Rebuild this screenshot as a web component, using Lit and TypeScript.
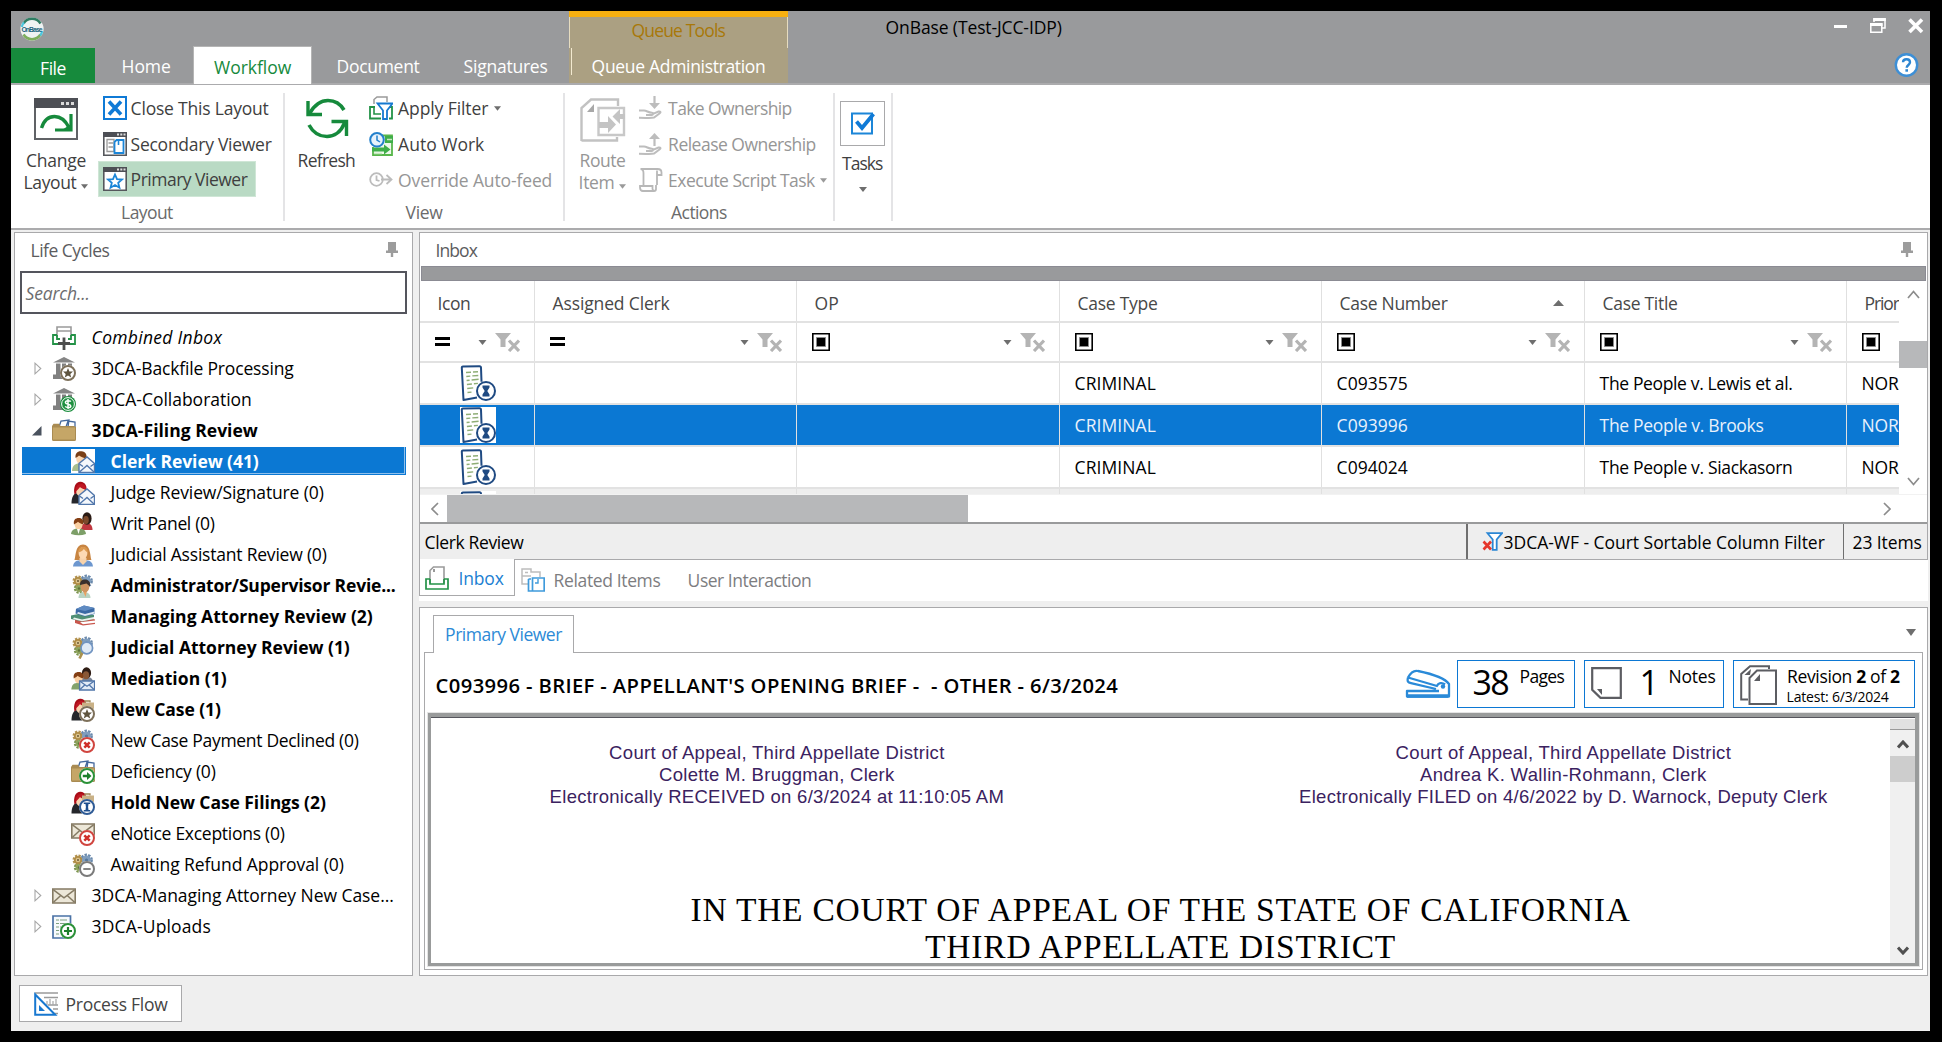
import { LitElement, html, css, svg, nothing } from "lit";
import { customElement, property } from "lit/decorators.js";
import { classMap } from "lit/directives/class-map.js";

/* A one-line label whose letter spacing is tuned so that it spans a set width. */
@customElement("fit-text")
class FitText extends LitElement {
  @property() text = "";
  @property({ type: Number }) w = 0;

  static styles = css`
    :host { display: inline-block; flex: none; white-space: pre; }
    .run { margin-left: -0.400px; white-space: pre; }
  `;

  firstUpdated() {
    const run = this.renderRoot.querySelector(".run") as HTMLElement;
    const natural = run.getBoundingClientRect().width;
    const gaps = Math.max(1, this.text.length - 1);
    this.style.width = `${this.w}px`;
    run.style.letterSpacing = `${((this.w + 1.2 - natural) / gaps).toFixed(3)}px`;
  }

  render() {
    return html`<span class="run">${this.text}</span>`;
  }
}

const t = (text: string, w: number, cls = "") =>
  html`<fit-text class=${cls} .text=${text} .w=${w}></fit-text>`;

const icon = (w: number, h: number, body: unknown, box = `0 0 ${w} ${h}`) =>
  html`<svg class="ico" width=${w} height=${h} viewBox=${box} fill="none">${body}</svg>`;

const caret = (fill = "#6e6e6e", w = 7) =>
  html`<svg class="ico" width=${w} height="5" viewBox="0 0 8 5"><path d="M0 0h8L4 5z" fill=${fill} /></svg>`;

/* ---------- tree icon parts ---------- */
const capitol = svg`<path d="M1 5.500 12 0l11 5.500z" fill="#858585"/><path d="M4 6.500h4.500v11H4zM10 6.500h4v11h-4zM16 6.500h4v9h-4zM1 17.500h12V22H1z" fill="#808080"/>`;
const badge = (color: string, inner: unknown) =>
  svg`<circle cx="16" cy="16" r="8" fill="#fff"/><circle cx="16" cy="16" r="7" fill="#fff" stroke=${color} stroke-width="2"/>${inner}`;
const starB = badge("#7d705a", svg`<path d="m16 11 1.400 3.400 3.600.2-2.700 2.300.9 3.500-3.200-2-3.200 2 .9-3.500-2.700-2.300 3.600-.2z" fill="#5f5540"/>`);
const dollarB = svg`<circle cx="16" cy="16" r="8" fill="#1e9040"/><circle cx="16" cy="16" r="6.400" stroke="#fff" stroke-width="1"/><path d="M18.800 13.600c-.8-1.200-5.400-1.400-5.400.8s5.400 1.300 5.400 3.500-4.400 2-5.600.5M16 11v10" stroke="#fff" stroke-width="1.500"/>`;
const xB = badge("#d0453f", svg`<path d="m13.300 13.300 5.400 5.400m0-5.400-5.400 5.400" stroke="#cf2f2a" stroke-width="2.500"/>`);
const arrowB = badge("#2b9138", svg`<path d="M11.800 14.800H16v-2.800l4.500 4-4.500 4v-2.800h-4.200z" fill="#1d7f2c"/>`);
const hourB = badge("#2f5b96", svg`<path d="M12.800 11.500h6.400v1.600h-1.700l-.4 2.900.4 3h1.700v1.600h-6.400V19h1.700l.4-3-.4-2.900h-1.700z" fill="#1e4f8f"/>`);
const minusB = badge("#7b7b7b", svg`<path d="M12.300 16h7.400" stroke="#777" stroke-width="1.800"/>`);
const plusB = badge("#2b9138", svg`<path d="M12 16h8M16 12v8" stroke="#1d7f2c" stroke-width="2.200"/>`);
const briefcase = svg`<path d="M14 4.500V3h5v1.500" stroke="#9c8454" stroke-width="1.300"/><path d="M11 4.500h12v7H11z" fill="#c9b186"/>`;
const miniMail = svg`<path d="m8 14.500 8-6.500 7.500 6.500v9H8z" fill="#f5f8fc" stroke="#5277ab" stroke-width="1.400"/><path d="m8.500 15 3.500 2.500m11-2.500-3.500 2.500M8.500 23l7.500-6.500 7 6.500" stroke="#5277ab" stroke-width="1.400"/>`;
const judge = svg`<path d="M.5 22.500c0-6 2-9.500 4.500-10.500l6 4v6.500z" fill="#25262b"/><path d="M3.500 13.500C2 6 5 .5 9.500.8c5 .2 6.500 5 6 8.200H9z" fill="#a90d18"/><ellipse cx="9.500" cy="10" rx="4.300" ry="5.200" fill="#f9d3b0"/><path d="M4.500 11C4 6 7 3 10 3s5 2 5 5C12 8.500 10 7 9 6c-1 2-3 3-4.500 5z" fill="#bf1622"/>`;
const clerk = svg`<path d="M1 22c.3-5.500 3-7.500 7-7.500s6 3 6 7.500z" fill="#a9bf8f"/><ellipse cx="9.800" cy="9.500" rx="4.600" ry="5.600" fill="#fbd5ae"/><path d="M4.600 9C3.800 4 7 1.700 10.500 2.200 14.600 2.500 16.500 6 15.300 10 13 8.800 9 7.600 8 6.600 7 8 5.500 8.200 4.600 9z" fill="#7a3f16"/>`;
const pair = svg`<path d="M10 18c0-5 2-7 6-7 3.500 0 5.500 3 5.500 7z" fill="#c0373f"/><ellipse cx="16" cy="6.500" rx="4.600" ry="6.200" fill="#2a1a14"/><ellipse cx="15" cy="8" rx="2.800" ry="4" fill="#7d4a2c"/><path d="M0 22C.5 18 3 16.500 7.500 16.500S14.500 18 15 22q-7 2.500-15 0z" fill="#7d9f68"/><ellipse cx="7.600" cy="12.500" rx="4" ry="4.800" fill="#fbd0a2"/><path d="M3 12.500c-.8-4.500 1.400-6.500 4.800-6.500s5.400 2.500 4.500 6.500c-2-.8-4.500-2-5.300-2.800C6 11 4 11.500 3 12.500z" fill="#843f14"/><path d="M6 17h3l-1.500 5z" fill="#fff"/>`;
const gears = svg`<circle cx="7" cy="7" r="4.400" stroke="#b3924f" stroke-width="2.200" stroke-dasharray="2.200 1.250"/><circle cx="15.500" cy="7" r="5.200" stroke="#6a89ac" stroke-width="2.400" stroke-dasharray="2.400 1.250"/><circle cx="8" cy="14.500" r="4.200" stroke="#7d9450" stroke-width="2" stroke-dasharray="2.200 1.200"/><circle cx="15.500" cy="7" r="4.600" fill="#7f9dbd"/><circle cx="7" cy="7" r="3.200" fill="#dcc48d" stroke="#b08d47" stroke-width="1.800"/><circle cx="7" cy="7" r="1" fill="#6b5a34"/><circle cx="8" cy="14.500" r="3.400" fill="#8da35c"/><circle cx="8" cy="14.500" r="1.200" fill="#5e7338"/><circle cx="15.500" cy="7" r="1.600" fill="#56779b"/>`;
const folder = svg`<path d="m7 8 2-6 8-1-1 7zM14 8l2-6 7 1v6z" fill="#fff" stroke="#44689c" stroke-width="1.300"/><path d="M0 7 1.500 4.800H7L8.500 7H22l2 1v12.500q0 1.500-1.500 1.500h-21Q0 22 0 20.500z" fill="#a98b52"/><path d="M1 8.500h22v12H1z" fill="#c5a667"/>`;
const mail = svg`<path d="M.8 5h22.400v14H.8z" fill="#ece7d8" stroke="#847a63" stroke-width="1.600"/><path d="m1.500 5.800 10.500 8 10.500-8M1.500 18.300l7.500-7m13.500 7-7.500-7" stroke="#847a63" stroke-width="1.500"/>`;

const treeIcons: Record<string, unknown> = {
  combined: svg`<path d="M5 11V1h14v10M5 5h14" stroke="#9a9a9a" stroke-width="1.600"/><path d="M5 9H1v9h7M19 9h4v9h-7M5 9v4h3M19 9v4h-3" stroke="#239247" stroke-width="1.800"/><path d="M12 11.500V24M6 17.500h12" stroke="#4c4c4c" stroke-width="2.800"/>`,
  capStar: svg`${capitol}${starB}`,
  capDollar: svg`${capitol}${dollarB}`,
  folder,
  clerk: svg`<path d="M0 0h24v24H0z" fill="#fff"/>${clerk}${miniMail}`,
  judge: svg`${judge}${miniMail}`,
  pair,
  woman: svg`<path d="M3.500 17C5 14 4 1.500 12 1.500S19 14 20.500 17z" fill="#c88542"/><path d="M2 23.500c.5-4.500 3-6.500 10-6.500s9.500 2 10 6.500z" fill="#6d97cf"/><path d="M8.500 15h7v3.500L12 22l-3.500-3.500z" fill="#f8d3ab"/><ellipse cx="12" cy="10" rx="4.400" ry="6" fill="#fdd9b3"/><path d="M7.200 9.500C7.500 5 10 3.500 13 4c3 .5 3.800 3 3.800 5.500-2-1-3-2.500-4-3.500-1 2-3.300 3-5.600 3.500z" fill="#dc9a50"/>`,
  admin: svg`${gears}<path d="M7.500 24c0-4 2-6 5.500-6s6.500 2 6.500 6z" fill="#b9d3c2"/><path d="M12 17h4l-1.500 6z" fill="#e9a263"/><ellipse cx="14" cy="13" rx="4.300" ry="5.200" fill="#cf9561"/><path d="M9 11c0-4 2-5.500 5-5.500s6 2 5 7l-3.500-3z" fill="#3a302c"/>`,
  books: svg`<path d="m4 15 14-2 6 1.500v4.500l-12 1.500-8-2.500z" fill="#c9564c"/><path d="m9 17.300 15-1.800v2.300L12 19.300z" fill="#fff"/><path d="m0 10.500 12-2.500 11 2v4l-12 2.500L0 14z" fill="#4f8f74"/><path d="m3 12.500 8 2 12-2.500v2L11 16.300 2 14z" fill="#eef2ee"/><path d="m5 4 8-3.500L23.500 3v6L14 11.500 4.500 8.500z" fill="#3a68a4"/><path d="m7 7 7 2 9.500-2.500V8.500L14 11 6 8.500z" fill="#dfe8f2"/><path d="m5 4 8-3.500L23.500 3 14 6z" fill="#5f8bc2"/>`,
  gearGlass: svg`${gears}<path d="m11.500 16.500-3 6" stroke="#a9904f" stroke-width="2.600"/><circle cx="15.800" cy="12" r="5.800" fill="#dfeaf6" stroke="#7295c2" stroke-width="1.700"/>`,
  mediation: svg`<path d="M10 16c0-4 2-6 6-6s6 2 6 6z" fill="#7b8494"/><ellipse cx="15.500" cy="6" rx="4.600" ry="5.800" fill="#2e1c14"/><ellipse cx="15" cy="8.200" rx="3.200" ry="4" fill="#8a5836"/><path d="M.3 22.500C.8 17 3 16 7.500 16s6 2 6 6.500z" fill="#83a36c"/><ellipse cx="7.500" cy="11.500" rx="4" ry="4.800" fill="#fbd0a2"/><path d="M2.800 11.500c-.8-4.500 1.400-6.500 5-6.500s5.200 2.500 4.300 6.500c-2-.8-4.600-2-5.400-2.800-.8 1.300-2.700 1.800-3.900 2.800z" fill="#843f14"/><path d="M8.600 14h15v9h-15z" fill="#e3ecf7" stroke="#5277ab" stroke-width="1.400"/><path d="m9 14.300 7 5 7-5M9 22.500l5-4.700m9 4.700-5-4.700" stroke="#5277ab" stroke-width="1.300"/>`,
  newCase: svg`${judge}${briefcase}${starB}`,
  gearX: svg`${gears}${xB}`,
  folderArrow: svg`${folder}${arrowB}`,
  hold: svg`${judge}${briefcase}${hourB}`,
  mailX: svg`<g transform="translate(0 -3)">${mail}</g>${xB}`,
  gearMinus: svg`${gears}${minusB}`,
  mail,
  upload: svg`<path d="M1 1h17.500v22H1z" fill="#f6f9fc" stroke="#4a72a5" stroke-width="1.700"/><path d="M4 5h3m1 0h7M4 8.500h3m1 0h7M4 12h3m1 0h5M4 15.500h3M4 19h3" stroke="#7fa07f" stroke-width="1.100"/>${plusB}`,
};

interface Node { label: string; w: number; icon: string; level: 1 | 2; open?: boolean; closed?: boolean; bold?: boolean; italic?: boolean; selected?: boolean; }
const nodes: Node[] = [
  { label: "Combined Inbox", w: 129, icon: "combined", level: 1, italic: true },
  { label: "3DCA-Backfile Processing", w: 201, icon: "capStar", level: 1, closed: true },
  { label: "3DCA-Collaboration", w: 159, icon: "capDollar", level: 1, closed: true },
  { label: "3DCA-Filing Review", w: 165, icon: "folder", level: 1, open: true, bold: true },
  { label: "Clerk Review (41)", w: 147, icon: "clerk", level: 2, bold: true, selected: true },
  { label: "Judge Review/Signature (0)", w: 212, icon: "judge", level: 2 },
  { label: "Writ Panel (0)", w: 103, icon: "pair", level: 2 },
  { label: "Judicial Assistant Review (0)", w: 215, icon: "woman", level: 2 },
  { label: "Administrator/Supervisor Revie...", w: 284, icon: "admin", level: 2, bold: true },
  { label: "Managing Attorney Review (2)", w: 261, icon: "books", level: 2, bold: true },
  { label: "Judicial Attorney Review (1)", w: 238, icon: "gearGlass", level: 2, bold: true },
  { label: "Mediation (1)", w: 115, icon: "mediation", level: 2, bold: true },
  { label: "New Case (1)", w: 109, icon: "newCase", level: 2, bold: true },
  { label: "New Case Payment Declined (0)", w: 247, icon: "gearX", level: 2 },
  { label: "Deficiency (0)", w: 104, icon: "folderArrow", level: 2 },
  { label: "Hold New Case Filings (2)", w: 214, icon: "hold", level: 2, bold: true },
  { label: "eNotice Exceptions (0)", w: 173, icon: "mailX", level: 2 },
  { label: "Awaiting Refund Approval (0)", w: 232, icon: "gearMinus", level: 2 },
  { label: "3DCA-Managing Attorney New Case...", w: 301, icon: "mail", level: 1, closed: true },
  { label: "3DCA-Uploads", w: 118, icon: "upload", level: 1, closed: true },
];

/* ---------- ribbon icons ---------- */
const winFrame = svg`<path d="M.8 .8h22.400v22.400H.8z" fill="#fff" stroke="#55575c" stroke-width="1.600"/><path d="M0 0h24v5H0z" fill="#4d4f55"/><path d="M14 1.600h2v2h-2zM17.300 1.600h2v2h-2zM20.500 1.600h2v2h-2z" fill="#dcdcdc"/>`;
const icons = {
  changeLayout: icon(44, 42, svg`<path d="M1 1h42v40H1z" fill="#fff" stroke="#606266" stroke-width="2"/><path d="M0 0h44v10H0z" fill="#4d4f55"/><path d="M27 4h3v3h-3zM32 4h3v3h-3zM37 4h3v3h-3z" fill="#dadada"/><path d="M7.500 30C10 22 15 18.500 20.500 18.500c6.500 0 11.500 5 14.500 11" stroke="#168a3c" stroke-width="3.400"/><path d="M37 16v16H21" stroke="#168a3c" stroke-width="3.200"/><path d="m28 32 9-6v6z" fill="#168a3c"/>`),
  closeLayout: icon(24, 24, svg`<path d="M1 1h22v22H1z" stroke="#0f7ad6" stroke-width="2" fill="#fff"/><path d="m6 5.500 12 13M18 5.500l-12 13" stroke="#0f7ad6" stroke-width="3.600"/>`),
  secondary: icon(24, 24, svg`${winFrame}<path d="M4 7.500h7v12H4zM5.500 11H10m-4.500 4H10" stroke="#9a9a9a" stroke-width="1.300"/><path d="M13.500 8h7v13h-9V10z" fill="#fff" stroke="#1c86d8" stroke-width="1.800"/><path d="M15.500 9v4" stroke="#1c86d8" stroke-width="1.600"/>`),
  primary: icon(24, 24, svg`${winFrame}<path d="m12 7.500 2 4.600 5 .4-3.800 3.300 1.200 4.900-4.400-2.700-4.400 2.700 1.200-4.900L5 12.500l5-.4z" stroke="#1c86d8" stroke-width="1.800"/>`),
  refresh: icon(44, 42, svg`<path d="M3 3v13.500h14" stroke="#168a3c" stroke-width="3.400"/><path d="M4.500 15.500C10 6 16 2.500 23 2.500c7 0 12.500 3.500 16 9.500" stroke="#168a3c" stroke-width="3.600"/><path d="M41.500 38V23.500h-15" stroke="#168a3c" stroke-width="3.400"/><path d="M39.500 25C36 34 29 38.500 22 38.500S8 34.500 4 27" stroke="#168a3c" stroke-width="3.600"/>`),
  applyFilter: icon(24, 24, svg`<path d="M5 8V3.500L8 1h10v5" stroke="#9a9a9a" stroke-width="1.500"/><path d="M6 11H1v11.500h11M19.500 11H23v11.500h-3" stroke="#239247" stroke-width="1.800"/><path d="M5 11v7h7" stroke="#239247" stroke-width="1.600"/><path d="M8.500 7.500h15l-5.500 7V23h-4v-8.500z" fill="#fff" stroke="#1579d0" stroke-width="1.800"/>`),
  autoWork: icon(24, 24, svg`<path d="M11 3.500h12V23H4v-8" fill="#eef8ec" stroke="#58b64b" stroke-width="1.800"/><path d="M16 4h8v7h-8zM3 15.500h12v-3l6.500 5-6.500 5v-3H3z" fill="#3fae49"/><path d="M18 7.500h5M5 21.500h8" stroke="#c5e8bf" stroke-width="1.400"/><circle cx="8" cy="7.800" r="6.800" fill="#e7f2fb" stroke="#2380cc" stroke-width="2"/><path d="M8 3.500V8l3 2" stroke="#2380cc" stroke-width="1.500"/>`),
  override: icon(24, 24, svg`<circle cx="7.500" cy="11.500" r="6.300" stroke="#bcbcbc" stroke-width="1.800"/><path d="M7.500 7.500V12l3 1M12 11.500h10m-4.500-4.500 5 4.500-5 4.500" stroke="#bcbcbc" stroke-width="1.800"/>`),
  route: icon(46, 44, svg`<path d="M1.500 43V10L11 1.500h27V8" stroke="#c2c2c2" stroke-width="2.400"/><path d="M1.500 42.500H37V39" stroke="#c2c2c2" stroke-width="2.400"/><path d="M14 6v8H7z" fill="#a8a8a8"/><path d="M18.500 10H44v27H18.500z" fill="#fff" stroke="#c8c8c8" stroke-width="2.400"/><path d="M19 24h9v-6l8 8.500-8 8.500v-5h-9zM45 16h-5v-5l-7.500 7.500L40 26v-5h5z" fill="#c4c4c4"/>`),
  take: icon(24, 24, svg`<path d="M15.500 0v8" stroke="#bdbdbd" stroke-width="2.200"/><path d="M10 7l5.500 6L21 7z" fill="#bdbdbd"/><path d="M0 14.500h5c3 0 4 2.200 8 2.200 1.500 0 1.500 2.200 0 2.200H7m7-1 5.500-2.400c2.200-.4 2.500.9 1.300 1.800L15 21.500c-4 1-7 .2-15 .2" stroke="#bdbdbd" stroke-width="2"/>`),
  release: icon(24, 24, svg`<path d="M15.500 14V5" stroke="#bdbdbd" stroke-width="2.200"/><path d="m10 7 5.500-6L21 7z" fill="#bdbdbd"/><path d="M0 14.500h5c3 0 4 2.200 8 2.200 1.500 0 1.500 2.200 0 2.200H7m7-1 5.500-2.400c2.200-.4 2.500.9 1.300 1.800L15 21.500c-4 1-7 .2-15 .2" stroke="#bdbdbd" stroke-width="2"/>`),
  script: icon(24, 24, svg`<path d="M4.500 18V5q0-4-3-4h17q4 0 4 3.500V7H18V2.500M17 17v4q0 2-2 2H4q-3 0-3-3.500V18h12.500V21q.5 2 2 2M18 7v10" stroke="#b8b8b8" stroke-width="1.800"/>`),
  tasks: icon(24, 24, svg`<path d="M1 1.500h20v20H1z" stroke="#1c86d8" stroke-width="2"/><path d="m5.500 9.500 5.500 6.500L22.500 2" stroke="#0f7ad6" stroke-width="3.800"/>`),
};
const pin = icon(12, 15, svg`<path d="M2 0h8v8.500h2V11H7.200v4H4.800v-4H0V8.500h2z" fill="#9c9c9c"/>`);
const funnelX = icon(25, 19, svg`<path d="M0 0h16l-5.500 6.500V14h-5V6.500z" fill="#b4b4b4"/><path d="m14 7.500 10 10.500m0-10.500L14 18" stroke="#b4b4b4" stroke-width="3.200"/>`);
const equals = icon(15, 10, svg`<path d="M0 0h15v3H0zM0 6h15v3H0z" fill="#000"/>`);
const contains = icon(18, 18, svg`<path d="M.8 .8h16.400v16.400H.8z" fill="#fff" stroke="#000" stroke-width="1.600"/><path d="M4.500 4.500h9v9h-9z" fill="#000" stroke="#8a8a8a" stroke-width="1"/>`);
const docIcon = icon(36, 36, svg`<path d="M1.800 2.800 20.500 1.200l1.500 24.300L17 33 3 35z" fill="#fff"/><path d="M17 32.500 3.500 35 1.800 2.800Q1.700 1.500 3 1.400L19.500 1.200q1.500 0 1.500 1.500l.5 14" stroke="#1f4a82" stroke-width="2" stroke-linejoin="round"/><path d="m6 7.500 5-.3m2-.2 5-.3M6.300 11.500l4-.4m2-.2 6-.4M6.600 15.500l3-.3m2-.2 7-.7M6.900 19.500l5-.5m2-.2 4-.4M7.200 23.500l6-.6M7.500 27.500l4-.4" stroke="#8fae76" stroke-width="1.400"/><circle cx="26" cy="26" r="9" fill="#fff" stroke="#1f4a82" stroke-width="2"/><path d="M22.500 20.500h7v2L27.300 26l2.200 3.500v2h-7v-2l2.200-3.500-2.200-3.500z" fill="#1f4a82"/>`);

interface Col { title: string; w: number; tw: number; eq?: boolean; sort?: boolean; last?: boolean; }
const cols: Col[] = [
  { title: "Icon", w: 115, tw: 32, eq: true },
  { title: "Assigned Clerk", w: 262, tw: 116, eq: true },
  { title: "OP", w: 263, tw: 23 },
  { title: "Case Type", w: 262, tw: 79 },
  { title: "Case Number", w: 263, tw: 107, sort: true },
  { title: "Case Title", w: 262, tw: 74 },
  { title: "Prior", w: 52, tw: 34, last: true },
];
const rows = [
  { num: "C093575", title: "The People v. Lewis et al.", tw: 192 },
  { num: "C093996", title: "The People v. Brooks", tw: 163, sel: true },
  { num: "C094024", title: "The People v. Siackasorn", tw: 192 },
];

@customElement("app-root")
class AppRoot extends LitElement {
  static styles = css`
    :host { display: block; width: 1942px; height: 1042px; background: #000; font: 17.5px/22px "Open Sans", "Noto Sans", sans-serif; color: #000; overflow: hidden; }
    * { box-sizing: border-box; }
    .ico { display: block; flex: none; }
    .window { height: 1042px; padding: 11px 12px 11px 11px; display: flex; flex-direction: column; }

    .top { height: 74px; background: #999a9c; border-bottom: 2px solid #ababad; display: flex; align-items: stretch; color: #fff; flex: none; }
    .brand { width: 558px; flex: none; display: flex; flex-direction: column; justify-content: space-between; }
    .logo { padding: 6px 0 0 9px; }
    .tabs { display: flex; height: 36px; align-items: stretch; }
    .tab { display: flex; align-items: center; justify-content: center; padding-top: 2px; flex: none; }
    .file { width: 84px; background: #168a3c; padding-top: 4px; margin-top: 1px; }
    .home { width: 98px; padding-left: 4px; }
    .workflow { width: 119px; background: #fff; color: #168a3c; margin-bottom: -1px; border: 1px solid #b5b5b5; border-bottom: 0; margin-top: -1px; }
    .document { width: 132px; }
    .signatures { width: 123px; }
    .context { width: 219px; flex: none; border-top: 6px solid #f7b011; background: #aba082; display: flex; flex-direction: column; }
    .context-title { height: 31px; display: flex; align-items: center; justify-content: center; color: #a87809; border: solid #e6dcc0; border-width: 0 1px; padding-bottom: 6px; }
    .context-tab { flex: 1; display: flex; align-items: center; justify-content: center; position: relative; }
    .context-tab::before { content: ""; position: absolute; left: 2px; top: 0; width: 1px; height: 27px; background: #f3ead0; }
    .caption { margin-left: 98px; padding-top: 5px; color: #000; }
    .window-side { margin-left: auto; width: 110px; display: flex; flex-direction: column; align-items: flex-end; }
    .controls { display: flex; padding: 7px 6px 0 0; gap: 22px; height: 42px; }
    .help { padding-right: 11px; }

    .ribbon { height: 145px; background: #fff; border-bottom: 2px solid #ababad; display: flex; padding-top: 5px; color: #3f3f3f; flex: none; }
    .rule { width: 2px; height: 128px; margin-top: 3px; background: #e4e4e6; flex: none; }
    .group { display: flex; flex-direction: column; }
    .group-body { display: flex; height: 108px; }
    .group-name { height: 28px; display: flex; align-items: center; justify-content: center; color: #6b6b6b; }
    .g1 { width: 272px; } .g2 { width: 278px; } .g3 { width: 268px; }
    .big { display: flex; flex-direction: column; align-items: center; padding-top: 8px; }
    .big .ico-box { height: 51px; }
    .big-line { height: 22px; display: flex; align-items: center; gap: 5px; }
    .big-line .ico { margin-top: 9px; }
    .b1 { width: 90px; } .b2 { width: 83px; } .b3 { width: 75px; }
    .list { display: flex; flex-direction: column; }
    .item { height: 36px; display: flex; align-items: center; gap: 4px; }
    .item fit-text { margin-bottom: 1px; }
    .item .tail { margin-left: 1px; }
    .l1 { margin-left: -3px; } .l1 .item { padding-left: 5px; }
    .l2 { margin-left: 1px; } .l2 .item { gap: 5.5px; }
    .l3 { margin-left: -1px; } .l3 .item { gap: 5.5px; }
    .active { background: #b9dac4; box-shadow: inset 0 0 0 1px #cfe6d6; width: 158px; margin-top: -1px; }
    .off { color: #969696; }
    .tasks { width: 56px; display: flex; flex-direction: column; align-items: center; padding: 11px 1px 0 0; gap: 6px; }
    .tasks-box { width: 45px; height: 45px; border: 1px solid #a9a9ab; display: flex; align-items: center; justify-content: center; }
    .tasks .tail { margin-top: 7px; }

    .body { flex: 1; background: #efefef; padding: 2px 2px 0 3px; display: flex; flex-direction: column; }
    .panes { display: flex; gap: 6px; height: 744px; flex: none; }
    .cycles { width: 399px; border: 1px solid #a9a9ab; background: #fff; padding: 0 5px; display: flex; flex-direction: column; }
    .pane-title { height: 38px; display: flex; justify-content: space-between; padding: 6px 9px 0 11px; color: #5c5c5e; }
    .pane-title .ico { margin-top: 3px; }
    .search { height: 43px; width: 387px; border: 2px solid #54555d; display: flex; align-items: center; padding-left: 4px; font-style: italic; color: #6c6c6e; padding-top: 1px; }
    .tree { padding-top: 8px; }
    .node { height: 31px; display: flex; align-items: center; margin-left: 2px; width: 384px; padding-left: 12px; }
    .node fit-text { margin-bottom: 2px; }
    .twisty { width: 18px; flex: none; }
    .node .ico-cell { width: 24px; margin-right: 16px; flex: none; }
    .child { padding-left: 31px; }
    .bold { font-weight: 700; }
    .italic { font-style: italic; }
    .selected { background: #0b78d3; color: #fff; height: 28px; margin-top: 1px; margin-bottom: 2px; box-shadow: inset -1px -1px 0 #0b78d3, inset -2px -2px 0 #8fc0ec; }
    .selected fit-text { margin-bottom: 0; }
    .flow-button { width: 163px; height: 37px; margin: 9px 0 0 5px; border: 1px solid #a9a9ab; background: #fff; display: flex; align-items: center; gap: 8px; padding-left: 14px; color: #444; }

    .right { width: 1509px; display: flex; flex-direction: column; }
    .inbox { height: 328px; border: 1px solid #a9a9ab; background: #fff; display: flex; flex-direction: column; flex: none; }
    .inbox-title { height: 33px; display: flex; justify-content: space-between; padding: 6px 14px 0 16px; color: #5c5c5e; flex: none; }
    .inbox-title .ico { margin-top: 3px; }
    .bar { height: 15px; background: #999a9c; border: 1px solid #8b8b93; margin: 0 1px; flex: none; }
    .grid-area { height: 213px; display: flex; flex: none; }
    .grid { width: 1479px; overflow: hidden; }
    .row { display: flex; border-bottom: 2px solid #e2e2e2; height: 42px; }
    .filter { height: 40px; }
    .head { color: #484848; }
    .cell { flex: none; border-right: 1px solid #e0e0e0; display: flex; align-items: center; overflow: hidden; }
    .cell.last { border-right: 0; }
    .head .cell { padding: 4px 20px 0 18px; justify-content: space-between; }
    .head .cell.last { padding-right: 0; }
    .filter .cell { padding: 0 14px 0 15px; }
    .filter .tools { margin-left: auto; display: flex; align-items: center; gap: 8px; }
    .data .cell { padding-left: 15px; }
    .data .icon-cell { padding-left: 40px; }
    .icon-bg { background: #fff; }
    .chosen { background: #0b78d3; color: #e9f1fb; }
    .stub { background: #eee; }
    .stub .cell { align-items: flex-start; padding-top: 2px; }
    .vscroll { width: 28px; background: #fff; display: flex; flex-direction: column; align-items: center; padding: 9px 0 8px; }
    .vthumb { width: 28px; height: 27px; background: #b7b8ba; margin: 42px 0 auto; }
    .hscroll { height: 28px; border-top: 1px solid #f2f2f2; display: flex; align-items: center; padding: 0 36px 0 11px; flex: none; }
    .hthumb { width: 521px; height: 27px; background: #b7b8ba; margin-left: 8px; margin-right: auto; }
    .status { height: 37px; border-top: 2px solid #999a9b; background: #eee; display: flex; align-items: stretch; flex: none; }
    .status > div { display: flex; align-items: center; }
    .status-name { flex: 1; padding-left: 5px; }
    .status-filter { width: 377px; border-left: 2px solid #6f6f6f; padding-left: 14px; gap: 1px; }
    .status-count { width: 84px; border-left: 1px solid #6f6f6f; padding-left: 9px; }
    .strip { height: 41px; background: #fff; display: flex; color: #7d7d7f; flex: none; }
    .strip-tab { display: flex; align-items: center; height: 39px; }
    .current { width: 96px; height: 37px; margin-top: -1px; border: 1px solid #a9a9ab; border-top: 0; background: #fff; color: #1b80d2; padding-left: 5px; gap: 10px; padding-top: 2px; }
    .related { padding-left: 6px; gap: 9px; }
    .user { padding-left: 28px; }

    .viewer { height: 369px; margin-top: 6px; border: 1px solid #a9a9ab; background: #fff; padding: 0 4px 5px 4px; display: flex; flex-direction: column; flex: none; }
    .viewer-tabs { height: 44px; display: flex; justify-content: space-between; padding: 7px 7px 0 9px; flex: none; }
    .viewer-tab { width: 141px; height: 38px; border: 1px solid #a9a9ab; border-bottom: 0; background: #fff; color: #2d8ad6; display: flex; align-items: center; justify-content: center; padding-bottom: 1px; z-index: 1; }
    .viewer-tabs > .ico { margin-top: 14px; }
    .viewer-body { height: 319px; border: 1px solid #a9a9ab; padding: 0 4px 0 3px; display: flex; flex-direction: column; }
    .doc-bar { height: 60px; display: flex; align-items: center; padding: 0 3px 0 8px; flex: none; }
    .doc-name { font-size: 20.2px; font-weight: 600; flex: 1; padding-top: 3px; }
    .card { height: 48px; border: 1px solid #0c78d4; display: flex; margin-top: 2px; }
    .card.pages { width: 118px; margin-left: 6px; padding-left: 15px; }
    .card.notes { width: 140px; margin-left: 9px; padding-left: 6px; }
    .card.rev { width: 182px; margin-left: 9px; padding: 0 0 0 6px; gap: 10px; }
    .num { font-size: 34px; line-height: 43px; }
    .lab { margin-left: 11px; margin-top: 4px; }
    .notes .ico { margin-top: 6px; margin-right: 18px; }
    .notes .lab { margin-left: 17px; }
    .rev .ico { margin-top: 4px; }
    .rev-text { padding-top: 4px; letter-spacing: -0.350px; white-space: nowrap; }
    .latest { font-size: 14px; line-height: 20px; display: block; letter-spacing: 0; }
    .page-frame { width: 1491px; height: 253px; border: 3px solid #999b9b; border-right-width: 4px; border-top-width: 4px; display: flex; box-shadow: 0 0 0 1px #e4e4e4; flex: none; }
    .page { flex: 1; border-top: 1px solid #55555c; overflow: hidden; font-family: "Liberation Sans", Arial, sans-serif; font-size: 18.500px; color: #3b2260; display: flex; flex-direction: column; }
    .stamps { display: flex; padding-top: 24px; }
    .stamp { display: flex; flex-direction: column; align-items: center; }
    .received { width: 691px; }
    .filed { width: 882px; margin-right: -115px; }
    .heading { font-family: "Liberation Serif", "Times New Roman", serif; font-size: 33.500px; line-height: 37px; color: #000; display: flex; flex-direction: column; align-items: center; padding: 83px 0 0 0; width: 1458px; }
    .page-scroll { width: 25px; background: #f0f0f0; border-top: 1px solid #55555c; display: flex; flex-direction: column; align-items: center; padding-bottom: 8px; }
    .split { width: 25px; height: 12px; background: #e1e1e1; border-bottom: 1px solid #9a9a9a; border-top: 1px solid #fff; flex: none; }
    .page-thumb { width: 25px; height: 26px; background: #cdcdcd; margin-top: 7px; margin-bottom: auto; }
    .page-scroll > .up { margin-top: 10px; }
  `;

  private top() {
    return html`<div class="top">
      <div class="brand">
        <div class="logo">${icon(24, 24, svg`<circle cx="12" cy="12" r="11.600" fill="#eef3f2"/><path d="M3.500 6.500a10 10 0 0 1 17 0" stroke="#2f7d63" stroke-width="2.600"/><path d="M3.500 17.500a10 10 0 0 0 17 0" stroke="#7dae5c" stroke-width="2.600"/><path d="M1.800 10A10 10 0 0 1 4 5.500M22.200 14a10 10 0 0 1-2 4.500" stroke="#4cc6dd" stroke-width="2.200"/><text x="12" y="14.600" font-family="Liberation Sans, sans-serif" font-size="6.800" font-weight="700" fill="#1d6580" text-anchor="middle" textLength="21">OnBase</text>`)}</div>
        <div class="tabs">
          <div class="tab file">${t("File", 25)}</div>
          <div class="tab home">${t("Home", 48)}</div>
          <div class="tab workflow">${t("Workflow", 76)}</div>
          <div class="tab document">${t("Document", 82)}</div>
          <div class="tab signatures">${t("Signatures", 83)}</div>
        </div>
      </div>
      <div class="context">
        <div class="context-title">${t("Queue Tools", 93)}</div>
        <div class="context-tab">${t("Queue Administration", 173)}</div>
      </div>
      <div class="caption">${t("OnBase (Test-JCC-IDP)", 175)}</div>
      <div class="window-side">
        <div class="controls">
          ${icon(14, 16, svg`<path d="M0 7h13v3H0z" fill="#fff"/>`)}
          ${icon(16, 16, svg`<path d="M4 4V1h11v9h-3" stroke="#fff" stroke-width="1.500"/><path d="M3.200 0h12.600v3H3.200zM0 5h12.500v3H0z" fill="#fff"/><path d="M.8 6h11v8.300H.8z" stroke="#fff" stroke-width="1.500"/>`)}
          ${icon(16, 16, svg`<path d="m1.500 1.500 12.500 12.500M14 1.500 1.500 14" stroke="#fff" stroke-width="3.600"/>`)}
        </div>
        <div class="help">${icon(25, 25, svg`<circle cx="12.500" cy="12" r="10.700" fill="#fff" stroke="#3d8fd6" stroke-width="2.400"/><path d="M9 9.300c.2-4.200 7-4 7 0 0 2.700-3.300 2.700-3.300 5.500" stroke="#2d86d2" stroke-width="2.400"/><path d="M11.400 16.200h2.600v2.500h-2.600z" fill="#2d86d2"/>`)}</div>
      </div>
    </div>`;
  }

  private ribbon() {
    return html`<div class="ribbon">
      <div class="group g1">
        <div class="group-body">
          <div class="big b1"><div class="ico-box">${icons.changeLayout}</div>
            <div class="big-line">${t("Change", 59)}</div>
            <div class="big-line">${t("Layout", 52)}${caret()}</div></div>
          <div class="list l1">
            <div class="item">${icons.closeLayout}${t("Close This Layout", 137)}</div>
            <div class="item">${icons.secondary}${t("Secondary Viewer", 140)}</div>
            <div class="item active">${icons.primary}${t("Primary Viewer", 116)}</div>
          </div>
        </div>
        <div class="group-name">${t("Layout", 51)}</div>
      </div>
      <div class="rule"></div>
      <div class="group g2">
        <div class="group-body">
          <div class="big b2"><div class="ico-box">${icons.refresh}</div><div class="big-line">${t("Refresh", 57)}</div></div>
          <div class="list l2">
            <div class="item">${icons.applyFilter}${t("Apply Filter", 89)}<span class="tail">${caret()}</span></div>
            <div class="item">${icons.autoWork}${t("Auto Work", 85)}</div>
            <div class="item off">${icons.override}${t("Override Auto-feed", 153)}</div>
          </div>
        </div>
        <div class="group-name">${t("View", 36)}</div>
      </div>
      <div class="rule"></div>
      <div class="group g3">
        <div class="group-body">
          <div class="big b3 off"><div class="ico-box">${icons.route}</div>
            <div class="big-line">${t("Route", 45)}</div>
            <div class="big-line">${t("Item", 35)}${caret("#9a9a9a")}</div></div>
          <div class="list l3 off">
            <div class="item">${icons.take}${t("Take Ownership", 123)}</div>
            <div class="item">${icons.release}${t("Release Ownership", 147)}</div>
            <div class="item">${icons.script}${t("Execute Script Task", 146)}<span>${caret("#9a9a9a")}</span></div>
          </div>
        </div>
        <div class="group-name">${t("Actions", 55)}</div>
      </div>
      <div class="rule"></div>
      <div class="tasks">
        <div class="tasks-box">${icons.tasks}</div>
        ${t("Tasks", 40)}
        <span class="tail">${caret("#6e6e6e", 8)}</span>
      </div>
      <div class="rule"></div>
    </div>`;
  }

  private node(n: Node) {
    const cls = { node: true, child: n.level === 2, bold: !!n.bold, italic: !!n.italic, selected: !!n.selected };
    const mark = n.closed
      ? icon(10, 13, svg`<path d="M1 1.200v10.600L6.800 6.500z" stroke="#a6a6a6" stroke-width="1.100"/>`)
      : n.open
        ? html`<svg class="ico" width="10" height="10" viewBox="3 0 10 10" overflow="visible"><path d="M10.500 0v9.500H1z" fill="#4a525e" /></svg>`
        : nothing;
    return html`<div class=${classMap(cls)}><span class="twisty">${mark}</span><span class="ico-cell">${icon(24, 24, treeIcons[n.icon])}</span>${t(n.label, n.w)}</div>`;
  }

  private cycles() {
    return html`<div class="cycles">
      <div class="pane-title">${t("Life Cycles", 78)}${pin}</div>
      <div class="search">${t("Search...", 63)}</div>
      <div class="tree">${nodes.map((n) => this.node(n))}</div>
    </div>`;
  }

  private cell(c: Col, body: unknown, cls = "") {
    return html`<div class="cell ${c.last ? "last" : ""} ${cls}" style="width:${c.w}px">${body}</div>`;
  }

  private inbox() {
    const chev = (d: string, w: number, h: number) => icon(w, h, svg`<path d=${d} stroke="#8c8c8c" stroke-width="1.700"/>`);
    return html`<div class="inbox">
      <div class="inbox-title">${t("Inbox", 41)}${pin}</div>
      <div class="bar"></div>
      <div class="grid-area">
        <div class="grid">
          <div class="row head">${cols.map((c) => this.cell(c, html`${t(c.title, c.tw)}${c.sort ? icon(11, 6, svg`<path d="M0 6h11L5.500 0z" fill="#6e6e6e"/>`) : nothing}`))}</div>
          <div class="row filter">${cols.map((c) => this.cell(c, html`${c.eq ? equals : contains}${c.last ? nothing : html`<span class="tools">${caret("#6e6e6e", 9)}${funnelX}</span>`}`))}</div>
          ${rows.map((r) => html`<div class="row data ${r.sel ? "chosen" : ""}">
            ${this.cell(cols[0], html`<span class="icon-bg">${docIcon}</span>`, "icon-cell")}
            ${this.cell(cols[1], nothing)}${this.cell(cols[2], nothing)}
            ${this.cell(cols[3], t("CRIMINAL", 80))}
            ${this.cell(cols[4], t(r.num, 70))}
            ${this.cell(cols[5], t(r.title, r.tw))}
            ${this.cell(cols[6], t("NOR", 36))}
          </div>`)}
          <div class="row data stub">
            ${cols.map((c, i) => this.cell(c, i ? nothing : html`<span class="icon-bg">${docIcon}</span>`, i ? "" : "icon-cell"))}
          </div>
        </div>
        <div class="vscroll">${chev("M1 8 6.500 1.500 12 8", 13, 9)}<div class="vthumb"></div>${chev("M1 1 6.500 7.500 12 1", 13, 9)}</div>
      </div>
      <div class="hscroll">${chev("M7 1 1 7l6 6", 8, 14)}<div class="hthumb"></div>${chev("M1 1l6 6-6 6", 8, 14)}</div>
      <div class="status">
        <div class="status-name">${t("Clerk Review", 98)}</div>
        <div class="status-filter">${icon(21, 19, svg`<path d="M5.500 1.200h14.500l-5.300 6.300v10.300h-4V7.500z" fill="#fff" stroke="#2a86d4" stroke-width="1.800"/><path d="m1.500 9.500 7.500 8m0-8-7.500 8" stroke="#e5362c" stroke-width="2.600"/>`)}${t("3DCA-WF - Court Sortable Column Filter", 320)}</div>
        <div class="status-count">${t("23 Items", 68)}</div>
      </div>
    </div>
    <div class="strip">
      <div class="strip-tab current">${icon(24, 24, svg`<path d="M5 17V4.500L8.500 1H19v16" stroke="#9a9a9a" stroke-width="1.600"/><path d="M9 3v3" stroke="#777" stroke-width="1.500"/><path d="M5 13H1v10h22V13h-4m-14 0v5h14v-5" stroke="#239247" stroke-width="1.700"/>`)}${t("Inbox", 44)}</div>
      <div class="strip-tab related">${icon(24, 24, svg`<path d="M7 16H1V1h9v3h9v5M1 8h9M4 4.500h3" stroke="#bdbdbd" stroke-width="1.500"/><path d="M7.500 11H10m-2.500 0v12H12M11.500 10h11.700v13H11.500z" stroke="#3f9bdc" stroke-width="1.700" fill="#fff"/><path d="M17 11v4h-3" stroke="#3f9bdc" stroke-width="1.400"/>`)}${t("Related Items", 106)}</div>
      <div class="strip-tab user">${t("User Interaction", 123)}</div>
    </div>`;
  }

  private viewer() {
    const chev = (d: string) => icon(12, 9, svg`<path d=${d} stroke="#505050" stroke-width="3"/>`);
    return html`<div class="viewer">
      <div class="viewer-tabs"><div class="viewer-tab">${t("Primary Viewer", 116)}</div>${icon(10, 7, svg`<path d="M0 0h10L5 7z" fill="#6e6e6e"/>`)}</div>
      <div class="viewer-body">
        <div class="doc-bar">
          <div class="doc-name">${t("C093996 - BRIEF - APPELLANT'S OPENING BRIEF -  - OTHER - 6/3/2024", 681)}</div>
          ${icon(46, 29, svg`<path d="M3 8.500C6 3 9 1 13 2c12 2.500 26 6 31 13v12.500H2v-5.500h32M3 8.500l29 8.500c1-3 5-4 8-1.500M3 8.500c-1 4 0 5 3 5.700L31 20" stroke="#2a8ad8" stroke-width="2.300" stroke-linejoin="round"/><circle cx="38" cy="17.500" r="2.200" fill="#2a8ad8"/><path d="M2 27h41" stroke="#2a8ad8" stroke-width="3.400"/>`)}
          <div class="card pages">${t("38", 36, "num")}${t("Pages", 44, "lab")}</div>
          <div class="card notes">${icon(31, 32, svg`<path d="M1.200 1.200h28.600v29.600H9.500l-8.300-8z" stroke="#5c5d62" stroke-width="2.200"/><path d="M6 22h5v6z" fill="#5c5d62"/>`)}${t("1", 12, "num")}${t("Notes", 46, "lab")}</div>
          <div class="card rev">${icon(37, 40, svg`<path d="M29 4V1.200H10L1.200 9v25.500H8" stroke="#5c5d62" stroke-width="2"/><path d="M10 10h-5.500L11 4z" fill="#5c5d62"/><path d="M9.500 13 17 5.500h19V39H9.500z" fill="#fff" stroke="#5c5d62" stroke-width="2"/><path d="M20 9v7h-6z" fill="#5c5d62"/>`)}
            <div class="rev-text">Revision <b>2</b> of <b>2</b><span class="latest">${t("Latest: 6/3/2024", 101)}</span></div></div>
        </div>
        <div class="page-frame">
          <div class="page">
            <div class="stamps">
              <div class="stamp received">${t("Court of Appeal, Third Appellate District", 334)}${t("Colette M. Bruggman, Clerk", 234)}${t("Electronically RECEIVED on 6/3/2024 at 11:10:05 AM", 453)}</div>
              <div class="stamp filed">${t("Court of Appeal, Third Appellate District", 334)}${t("Andrea K. Wallin-Rohmann, Clerk", 285)}${t("Electronically FILED on 4/6/2022 by D. Warnock, Deputy Clerk", 527)}</div>
            </div>
            <div class="heading">${t("IN THE COURT OF APPEAL OF THE STATE OF CALIFORNIA", 938)}${t("THIRD APPELLATE DISTRICT", 469)}</div>
          </div>
          <div class="page-scroll"><div class="split"></div><span class="up">${chev("M1 7.500 6 2l5 5.500")}</span><div class="page-thumb"></div>${chev("M1 1.500 6 7l5-5.500")}</div>
        </div>
      </div>
    </div>`;
  }

  render() {
    return html`<div class="window">
      ${this.top()}${this.ribbon()}
      <div class="body">
        <div class="panes">${this.cycles()}<div class="right">${this.inbox()}${this.viewer()}</div></div>
        <div class="flow-button">${icon(24, 24, svg`<path d="M1 1h23M10 5.500h14M19 17h5M14 13h10M18 21.500h6" stroke="#9a9a9a" stroke-width="1.500"/><path d="M13 13V9m3 4V7m3 6V9m3 4V7" stroke="#a8a8a8" stroke-width="1.200"/><path d="M1.200 2.500v20.300h20z" fill="#fff" stroke="#1878d0" stroke-width="2"/><path d="M5 13v6h6z" fill="#1878d0"/>`)}${t("Process Flow", 101)}</div>
      </div>
    </div>`;
  }
}
